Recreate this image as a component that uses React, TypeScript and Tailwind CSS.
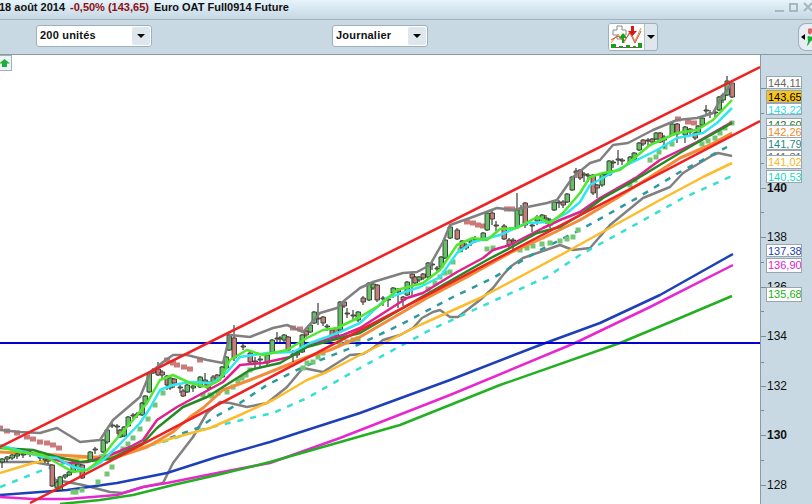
import React from 'react';

// picture coordinates: the svg viewBox starts at y=55 so numbers read straight off the screenshot
const upperBand = '0,430 20,432 40,433 57,428 80,442 100,440 113,420 140,397 150,373 163,362 173,355 187,355 207,360 223,363 230,335 250,337 273,328 287,325 303,332 320,313 337,308 345,300 360,288 373,282 403,273 417,272 430,265 443,242 450,225 470,218 497,208 513,210 547,203 557,200 573,177 590,163 600,160 613,145 628,143 653,130 677,120 697,118 713,113 720,100 732,83';
const lowerBand = '0,462 33,462 50,465 55,480 67,482 83,485 110,492 123,493 143,487 163,483 173,463 193,437 207,413 220,402 230,403 247,407 267,403 287,387 303,368 323,372 350,355 363,354 373,348 383,340 400,335 413,328 422,318 433,312 440,310 450,317 458,317 467,310 480,300 493,288 503,275 510,267 523,258 560,245 573,250 590,248 610,225 643,198 670,187 683,173 713,155 718,153 732,156';
const brightGreen = '0,447 20,452 43,455 57,463 73,472 87,470 100,460 113,443 133,420 147,403 160,380 173,375 190,383 207,387 220,380 230,360 247,350 263,355 287,350 307,338 323,330 337,328 360,317 380,305 397,290 423,283 440,270 457,245 473,238 487,240 500,229 517,228 537,217 550,223 563,213 580,193 590,177 603,173 620,170 650,145 677,133 697,130 713,120 732,100';
const cyanLine = '0,445 17,450 43,457 57,458 73,467 87,470 100,463 117,447 140,423 150,408 160,390 173,385 190,382 213,383 227,372 240,357 267,353 293,352 310,343 327,337 340,332 360,323 387,298 420,287 440,277 457,253 473,242 500,235 527,223 550,222 567,213 580,202 590,185 617,170 657,150 677,138 703,133 717,123 732,108';
const pinkLine = '0,446 50,458 67,463 87,462 110,455 130,447 143,440 157,420 177,407 203,393 223,382 240,365 263,363 290,357 313,343 343,335 360,328 407,298 423,293 457,272 483,258 493,250 510,245 543,228 560,220 580,212 600,198 637,177 660,160 697,142 732,122';
const darkGreen = '0,448 33,450 57,457 80,462 110,459 143,443 157,428 183,407 207,397 223,387 250,370 280,363 307,347 340,338 360,333 420,298 457,277 487,260 510,248 537,233 560,227 580,215 603,198 630,183 663,163 693,145 732,123';
const orangeLine = '0,452 57,455 93,457 117,457 147,447 173,432 190,417 203,408 223,390 250,380 280,368 307,357 330,350 360,337 427,298 467,277 510,253 543,238 580,220 617,198 680,158 710,145 732,133';
const yellowLine = '0,473 33,463 50,460 100,457 140,448 173,438 210,428 240,415 273,400 307,380 327,372 360,355 420,325 480,298 527,273 570,250 615,225 660,200 703,177 732,163';
const cyanDash = '0,487 43,470 75,460 120,452 160,443 200,430 233,422 273,413 307,398 360,368 430,330 500,298 547,277 580,255 640,222 683,198 732,176';
const tealDash = '170,438 200,427 213,418 240,403 267,385 303,367 353,347 400,325 453,297 493,278 540,250 580,230 637,198 680,172 727,147';
const navyLine = '0,495 67,490 117,483 167,473 217,457 270,442 307,430 360,413 450,380 540,345 600,323 660,295 733,254';
const magentaLine = '0,497 33,499 67,499 117,495 143,487 167,483 217,473 270,463 340,438 450,395 575,343 650,307 733,265';
const longGreen = '60,504 100,500 133,495 173,485 217,475 270,462 400,425 500,385 620,343 680,318 732,296';

const greenDots: number[][] = [
  [73, 492], [76, 492], [82, 490], [98, 482], [107, 474], [112, 467], [123, 449], [128, 444], [133, 438], [140, 429], [148, 419], [155, 405], [163, 393],
  [203, 395], [210, 395], [218, 393], [227, 392], [233, 387], [242, 378], [212, 396], [238, 381], [246, 375], [250, 370],
  [303, 368], [307, 363], [313, 362], [318, 357], [323, 353], [340, 343], [347, 342], [353, 340], [358, 339],
  [428, 289], [435, 283], [440, 277], [445, 273], [450, 272], [453, 262], [460, 250], [487, 249], [493, 248],
  [520, 250], [527, 248], [533, 246], [542, 244], [550, 243], [560, 241], [567, 239], [573, 237], [578, 230],
  [630, 185], [635, 180], [650, 160], [656, 157], [659, 152], [665, 147], [672, 144], [702, 144], [708, 141], [715, 138], [720, 133], [725, 128], [732, 123],
];
const redDots: number[][] = [
  [0, 428], [7, 431], [17, 433], [27, 437], [33, 439], [40, 442], [47, 443], [53, 445], [59, 448],
  [167, 360], [173, 363], [177, 365], [184, 367], [190, 369], [200, 360],
  [293, 328], [300, 329],
  [467, 222], [473, 223], [478, 225], [483, 226], [507, 209], [512, 209],
  [678, 119], [688, 122], [694, 123],
];

// x, wick top, body top, body bottom, wick bottom, up
type Candle = [number, number, number, number, number, boolean];
const candles: Candle[] = [
  [2, 458, 459, 462, 468, true], [7, 456, 457, 459, 462, true], [12, 454, 455, 458, 460, true], [17, 453, 454, 456, 459, true], [23, 453, 454, 455, 458, true], [30, 451, 452, 454, 457, true],
  [40, 456, 457, 458, 461, false], [45, 457, 458, 460, 463, false], [48, 458, 459, 461, 464, false],
  [52, 464, 465, 486, 487, false], [57, 481, 482, 488, 491, true], [60, 476, 477, 490, 491, true], [65, 474, 475, 477, 479, true], [69, 471, 472, 475, 476, true], [73, 461, 462, 472, 473, true], [78, 463, 464, 468, 472, true], [82, 464, 465, 478, 479, false],
  [90, 451, 452, 460, 462, true], [95, 447, 449, 450, 454, false], [103, 439, 440, 452, 453, true], [107, 429, 430, 442, 444, true], [112, 423, 425, 426, 428, false], [117, 424, 426, 427, 434, false], [120, 429, 430, 437, 438, false], [124, 426, 427, 436, 437, true], [128, 416, 417, 426, 427, true],
  [133, 413, 415, 416, 419, false], [137, 412, 414, 415, 418, false], [142, 402, 403, 415, 416, true], [145, 395, 396, 404, 405, true], [149, 372, 373, 392, 393, true], [153, 368, 370, 373, 374, false], [158, 362, 369, 375, 376, false], [162, 370, 372, 375, 378, false], [167, 375, 376, 385, 390, false], [170, 377, 378, 388, 390, true], [174, 378, 379, 383, 388, false],
  [180, 385, 387, 388, 393, false], [183, 389, 391, 396, 397, false], [187, 384, 385, 392, 393, true], [193, 385, 386, 388, 392, true], [200, 376, 377, 387, 388, true], [205, 373, 380, 382, 387, false], [208, 381, 382, 388, 390, false], [213, 375, 377, 383, 384, true], [217, 374, 375, 380, 381, false], [222, 366, 367, 377, 378, true], [226, 356, 357, 368, 370, true],
  [229, 334, 335, 350, 351, true], [234, 325, 338, 358, 361, false], [243, 343, 346, 347, 350, false], [250, 352, 353, 362, 364, false], [255, 357, 361, 362, 368, false], [260, 356, 359, 360, 367, false], [267, 354, 355, 363, 367, true], [272, 339, 340, 352, 353, true], [277, 332, 338, 339, 342, false], [280, 336, 338, 339, 343, false], [284, 334, 335, 340, 342, true], [288, 336, 337, 350, 352, false], [293, 350, 354, 355, 362, false], [297, 350, 352, 355, 358, false], [302, 334, 335, 352, 353, true], [306, 330, 331, 335, 337, false], [310, 324, 325, 332, 333, true], [314, 311, 312, 323, 324, true], [318, 303, 318, 319, 325, false], [323, 316, 317, 323, 326, false], [327, 324, 326, 327, 331, false], [332, 329, 330, 336, 338, false], [336, 327, 328, 336, 337, false], [340, 301, 302, 330, 331, true], [344, 300, 302, 306, 308, false], [347, 308, 313, 314, 318, false], [353, 310, 315, 316, 320, false], [358, 311, 312, 320, 322, true],
  [363, 296, 298, 302, 305, false], [369, 282, 283, 300, 301, true], [373, 283, 284, 288, 290, true], [377, 284, 285, 300, 302, false], [383, 296, 298, 299, 306, false], [388, 298, 299, 300, 307, false], [393, 287, 288, 293, 298, true], [398, 288, 289, 292, 308, false], [403, 296, 297, 300, 306, false], [407, 281, 282, 295, 296, true], [412, 273, 274, 278, 296, false], [415, 276, 277, 283, 285, false], [419, 276, 277, 280, 282, true], [423, 273, 274, 278, 280, false], [428, 262, 263, 277, 278, true], [432, 261, 264, 265, 270, false], [437, 266, 268, 269, 273, false], [441, 256, 257, 267, 268, true], [445, 239, 240, 258, 259, true], [450, 226, 227, 238, 239, true],
  [457, 228, 230, 239, 240, false], [462, 240, 241, 248, 252, false], [466, 243, 245, 248, 250, false], [471, 238, 241, 243, 246, true], [475, 236, 239, 240, 243, false], [483, 232, 233, 240, 241, true], [487, 212, 213, 230, 231, true], [492, 211, 213, 219, 225, false], [496, 221, 225, 226, 231, false], [504, 224, 226, 239, 240, false], [509, 238, 240, 245, 248, false], [513, 238, 240, 241, 251, false], [517, 193, 210, 227, 228, true], [521, 205, 208, 215, 216, true], [525, 202, 203, 225, 228, false],
  [532, 222, 225, 226, 232, false], [537, 215, 217, 221, 225, true], [542, 214, 215, 220, 222, true], [546, 215, 218, 220, 224, false], [550, 218, 220, 225, 228, true], [554, 201, 202, 210, 211, true], [559, 200, 202, 203, 208, false], [563, 200, 202, 205, 208, false], [567, 193, 194, 202, 203, true], [572, 176, 177, 190, 191, true],
  [576, 168, 171, 173, 178, false], [580, 169, 170, 178, 180, false], [584, 172, 174, 175, 182, false], [588, 173, 175, 176, 182, false], [593, 174, 175, 193, 195, false], [597, 184, 185, 188, 198, false], [602, 173, 174, 185, 187, true], [605, 172, 174, 175, 178, false], [609, 160, 161, 175, 176, true], [613, 160, 162, 163, 168, false], [618, 150, 159, 160, 165, false], [622, 158, 160, 161, 165, false], [630, 156, 157, 162, 163, true], [634, 152, 153, 160, 161, true], [639, 142, 143, 150, 151, true], [643, 139, 140, 144, 146, false], [648, 138, 140, 141, 146, false], [652, 138, 139, 142, 144, false], [656, 132, 133, 139, 140, true], [660, 132, 133, 142, 143, false], [664, 135, 137, 140, 148, true], [672, 123, 124, 135, 136, true], [677, 123, 124, 134, 143, false], [685, 126, 127, 135, 143, true], [690, 128, 129, 132, 135, false], [695, 132, 133, 138, 140, false], [698, 125, 126, 133, 134, true], [702, 117, 118, 125, 126, true], [706, 105, 110, 111, 115, false], [710, 110, 113, 114, 118, false], [715, 110, 112, 113, 117, false], [719, 96, 97, 110, 111, true], [723, 93, 95, 100, 103, true], [727, 76, 81, 95, 96, true], [732, 83, 83, 97, 98, false],
];

const axisTicks = [
  { y: 88, major: true }, { y: 113, major: false }, { y: 138, major: true }, { y: 163, major: false }, { y: 188, major: true }, { y: 212, major: false },
  { y: 237, major: true }, { y: 262, major: false }, { y: 287, major: true }, { y: 311, major: false }, { y: 336, major: true }, { y: 362, major: false },
  { y: 386, major: true }, { y: 410, major: false }, { y: 435, major: true }, { y: 460, major: false }, { y: 485, major: true },
];

const axisNumbers = [
  { y: 180, label: '140', bold: true },
  { y: 229, label: '138', bold: false },
  { y: 279, label: '136', bold: false },
  { y: 328, label: '134', bold: false },
  { y: 378, label: '132', bold: false },
  { y: 427, label: '130', bold: true },
  { y: 477, label: '128', bold: false },
];

const priceTags = [
  { top: 76, h: 13, label: '144,11', color: 'text-[#666666]', bg: 'bg-white' },
  { top: 118, h: 8, label: '142,60', color: 'text-[#1a7a1a]', bg: 'bg-white' },
  { top: 125, h: 13, label: '142,26', color: 'text-[#f08a30]', bg: 'bg-white' },
  { top: 150, h: 7, label: '141,31', color: 'text-[#666666]', bg: 'bg-white' },
  { top: 137, h: 13, label: '141,79', color: 'text-[#1f8a8a]', bg: 'bg-white' },
  { top: 155, h: 14, label: '141,02', color: 'text-[#f5b81f]', bg: 'bg-white' },
  { top: 170, h: 13, label: '140,53', color: 'text-[#20d8c8]', bg: 'bg-white' },
  { top: 244, h: 13, label: '137,38', color: 'text-[#1c3fb0]', bg: 'bg-white' },
  { top: 258, h: 15, label: '136,90', color: 'text-[#e020d0]', bg: 'bg-white' },
  { top: 287, h: 15, label: '135,68', color: 'text-[#18b018]', bg: 'bg-white' },
  { top: 103, h: 12, label: '143,22', color: 'text-[#30e0f0]', bg: 'bg-white' },
  { top: 90, h: 13, label: '143,65', color: 'text-black', bg: 'bg-[#f7c51c]' },
];

const Select = ({ label, className }: { label: string; className: string }) => (
  <div className={`h-[22px] shrink-0 flex items-center justify-between bg-white border border-[#9fb0ba] rounded-[3px] pl-[3px] pr-[1px] ${className}`}>
    <span className="text-[11px] tracking-[0.2px] font-bold text-[#111]">{label}</span>
    <span className="w-[18px] h-[18px] rounded-[2px] bg-[#dde7ed] flex items-center justify-center">
      <span className="w-0 h-0 border-l-[4px] border-r-[4px] border-t-[4px] border-l-transparent border-r-transparent border-t-black" />
    </span>
  </div>
);

const IndicatorIcon = () => (
  <svg width="33" height="24" viewBox="0 0 33 24">
    <path d="M3 5h4V1h5v4h4v5h-4v4H7v-4H3z" fill="#fff" stroke="#8a8a8a" />
    <path d="M1 18 8 9l6 9 6-12 5 10 6-13" fill="none" stroke="#c9a040" strokeWidth="1" />
    <path d="M1 15 8 11l6 5 6-8 5 10 6-12" fill="none" stroke="#d84040" strokeWidth="1" />
    <path d="M12 18v-5h-3l4-5 4 5h-3v5z" fill="#18a018" />
    <path d="M21 1h3v5h3l-4.500 5L18 6h3z" fill="#d81818" />
    <path d="M1 19h5v4H1zM9 21h4v2H9zM16 20h4v3h-4zM23 21h3v2h-3zM28 18h4v5h-4z" fill="#18a018" />
    <path d="M6 22h3v1H6zM13 22h3v1h-3zM20 22h3v1h-3zM26 22h2v1h-2z" fill="#d02090" />
  </svg>
);

const App: React.FC = () => {
  return (
    <div className="w-[812px] h-[504px] flex flex-col overflow-hidden font-['Liberation_Sans',Arial,sans-serif]">
      {/* title bar */}
      <div className="h-[20px] shrink-0 flex items-center justify-between bg-gradient-to-b from-[#e6f3fb] to-[#c6d8e3] border-b border-[#a3b3bc]">
        <div className="flex gap-[5px] text-[11px] font-bold text-[#111] whitespace-nowrap -ml-[1px] -mt-[4px]">
          <span>18 août 2014</span>
          <span className="text-[#8c0f14]">-0,50% (143,65)</span>
          <span>Euro OAT Full0914 Future</span>
        </div>
        <div className="flex items-center gap-[5px] -mt-[5px] -mr-[1px]">
          <span className="w-[9px] h-[2px] mt-[8px] bg-[#a9b6bd]" />
          <span className="w-[9px] h-[9px] border-2 border-[#a9b6bd]" />
          <svg width="10" height="10" viewBox="0 0 10 10"><path d="M1 1l8 8M9 1l-8 8" stroke="#a9b6bd" strokeWidth="2" /></svg>
        </div>
      </div>

      {/* toolbar */}
      <div className="h-[35px] shrink-0 flex items-center bg-[#c8d9e4] border-b border-[#8b9aa3] pl-[36px]">
        <Select label="200 unités" className="w-[116px] -mt-[3px]" />
        <Select label="Journalier" className="w-[96px] ml-[180px] -mt-[3px]" />
        <div className="w-[50px] h-[28px] shrink-0 ml-[180px] flex items-center bg-[#dde7ed] border border-[#9fb0ba] rounded-[3px] overflow-hidden">
          <div className="w-[36px] h-full bg-white flex items-center justify-center border-r border-[#b4c0c8]">
            <IndicatorIcon />
          </div>
          <div className="flex-1 flex items-center justify-center">
            <span className="w-0 h-0 border-l-[4px] border-r-[4px] border-t-[4px] border-l-transparent border-r-transparent border-t-black" />
          </div>
        </div>
        <div className="ml-[140px] w-[14px] h-[28px] shrink-0 bg-[#e6eef3] border-l border-y border-[#9fb0ba] rounded-l-[8px] flex items-center overflow-hidden">
          <svg width="14" height="22" viewBox="0 0 14 22" className="shrink-0">
            <path d="M2 11l4-3v6z" fill="#000" />
            <path d="M9 3c3-2 5 0 4 3s-3 3-4 1z" fill="#e06060" />
            <path d="M9 10c3 1 5 0 5 2s-2 3-3 4-1 3-3 4c0-2 1-3 1-5s-1-3 0-5z" fill="#18b030" />
          </svg>
        </div>
      </div>

      {/* chart and axis */}
      <div className="flex-1 flex min-h-0">
        <div className="relative w-[760px] bg-white">
          <svg width="760" height="449" viewBox="0 55 760 449" className="block" strokeLinejoin="round">
            <polyline points={lowerBand} fill="none" stroke="#808080" strokeWidth="2.500" />
            <polyline points={cyanDash} fill="none" stroke="#35e0d0" strokeWidth="2.500" strokeDasharray="6 7" />
            <polyline points={tealDash} fill="none" stroke="#2a9a9e" strokeWidth="2.500" strokeDasharray="6 7" />
            <polyline points={yellowLine} fill="none" stroke="#fbbd2c" strokeWidth="2.500" />
            <polyline points={navyLine} fill="none" stroke="#1d3fb8" strokeWidth="2.500" />
            <polyline points={magentaLine} fill="none" stroke="#e827d0" strokeWidth="2.500" />
            <polyline points={longGreen} fill="none" stroke="#22b022" strokeWidth="2.500" />
            <line x1="0" y1="343" x2="760" y2="343" stroke="#0000d0" strokeWidth="2" />
            {greenDots.map(([x, y], i) => (
              <rect key={i} x={x - 2.500} y={y - 2.500} width="5" height="5" fill="#74c574" />
            ))}
            {redDots.map(([x, y], i) => (
              <rect key={i} x={x - 3} y={y - 2.500} width="6" height="5" fill="#cb7a7a" />
            ))}
            <polyline points={orangeLine} fill="none" stroke="#f28c38" strokeWidth="3" />
            {candles.map(([x, wt, bt, bb, wb, up], i) => (
              <g key={i}>
                <line x1={x} y1={wt} x2={x} y2={wb} stroke="#101810" strokeWidth="1" />
                <rect x={x - 2} y={bt} width="4.500" height={Math.max(bb - bt, 1)} fill={up ? '#68bd68' : '#c87b7b'} stroke="#2a3a2a" strokeWidth="0.900" />
              </g>
            ))}
            <polyline points={upperBand} fill="none" stroke="#808080" strokeWidth="2.500" />
            <polyline points={pinkLine} fill="none" stroke="#e0208c" strokeWidth="2.500" />
            <polyline points={darkGreen} fill="none" stroke="#238a23" strokeWidth="2.500" />
            <polyline points={cyanLine} fill="none" stroke="#2fe6f2" strokeWidth="2.500" />
            <polyline points={brightGreen} fill="none" stroke="#4fe82e" strokeWidth="2.500" />
            <line x1="0" y1="447" x2="760" y2="67" stroke="#ee2222" strokeWidth="2.500" />
            <line x1="30" y1="503" x2="760" y2="121" stroke="#ee2222" strokeWidth="2.500" />
          </svg>
          {/* export icon */}
          <div className="absolute left-[-3px] top-0 w-[15px] h-[16px] bg-[#eef3f6] border border-[#9fb0ba] flex items-center justify-center">
            <svg width="11" height="10" viewBox="0 0 11 10"><path d="M5.500 1 11 5.500H8V9H3V5.500H0z" fill="#1fae3a" /></svg>
          </div>
        </div>

        {/* price axis */}
        <div className="relative flex-1 bg-[#c8d9e4] border-l border-[#8b9aa3] text-[12px] leading-[16px] text-[#111]">
          {axisTicks.map((t) => (
            <div key={t.y} className={`absolute left-0 h-px bg-[#7d8c95] ${t.major ? 'w-[5px]' : 'w-[3px]'}`} style={{ top: t.y - 55 }} />
          ))}
          {axisNumbers.map((n) => (
            <span key={n.label} className={`absolute left-[6px] ${n.bold ? 'font-bold' : ''}`} style={{ top: n.y - 55 }}>{n.label}</span>
          ))}
          {priceTags.map((p) => (
            <div
              key={p.label}
              className={`absolute left-[5px] w-[36px] border border-[#9aa6ad] overflow-hidden flex items-start pl-[1px] text-[11px] leading-[12px] ${p.bg} ${p.color}`}
              style={{ top: p.top - 55, height: p.h }}
            >
              {p.label}
            </div>
          ))}
        </div>
      </div>
    </div>
  );
};

export default App;
